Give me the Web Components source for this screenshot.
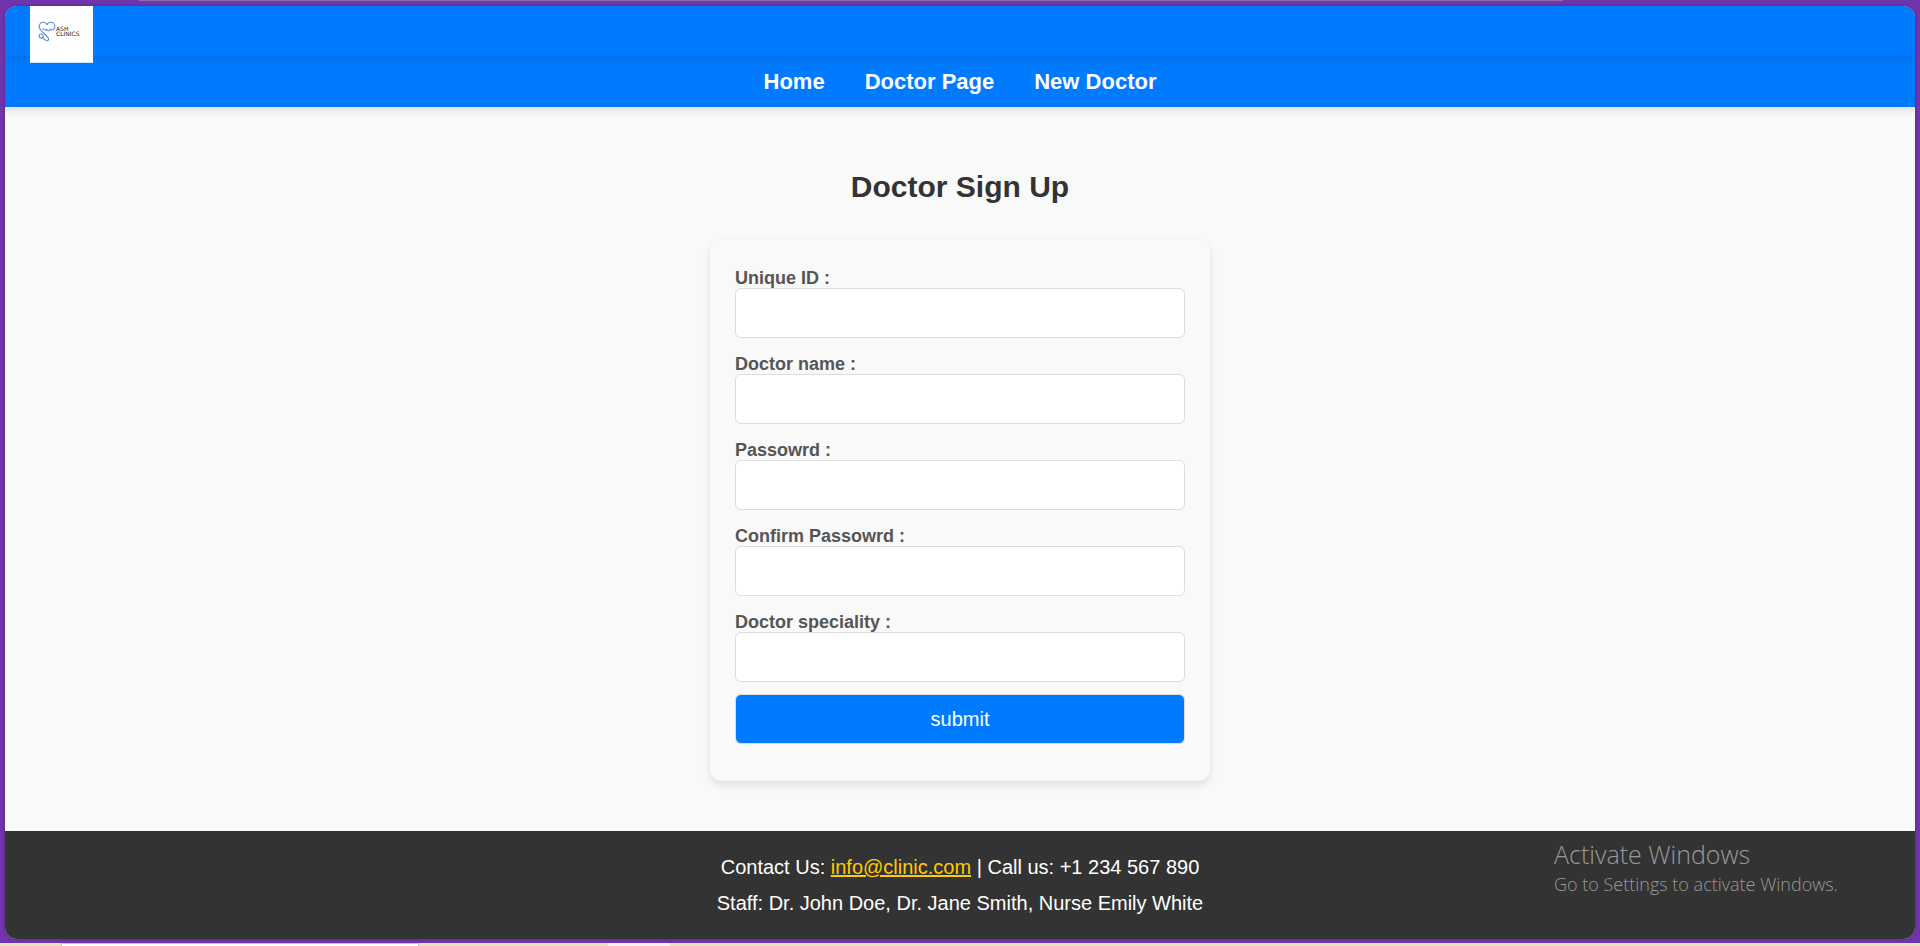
<!DOCTYPE html>
<html lang="en">
<head>
<meta charset="utf-8">
<meta name="viewport" content="width=device-width, initial-scale=1">
<title>Doctor Sign Up</title>
<style>
  body { margin: 0; font-family: "Liberation Sans", Arial, sans-serif; }
</style>
</head>
<body>
<clinic-desktop>
  <clinic-header></clinic-header>
  <clinic-nav>
    <a href="#home">Home</a>
    <a href="#doctor">Doctor Page</a>
    <a href="#new">New Doctor</a>
  </clinic-nav>
  <signup-page></signup-page>
  <clinic-footer></clinic-footer>
</clinic-desktop>

<script>
  const define = (name, html) => {
    const template = document.createElement('template');
    template.innerHTML = html;
    customElements.define(name, class extends HTMLElement {
      constructor() {
        super();
        this.attachShadow({ mode: 'open' }).append(template.content.cloneNode(true));
      }
    });
  };

  define('clinic-desktop', `
    <style>
      :host { display: flex; flex-direction: column; min-height: 100vh; background: #7034ac; box-sizing: border-box; }
      .edge { height: 1px; margin: 0 357px 5px 139px; background: #8a6cab; }
      .window { flex: 1; display: flex; flex-direction: column; margin: 0 5px 4px; border-radius: 12px; overflow: hidden; background: #f9f9f9; box-shadow: 0 0 3px rgba(0,0,0,.3); }
      .strip { height: 3px; display: flex; background: #e9e3b6; }
      .strip i { margin-left: 61px; width: 358px; background: #fff; border: 1px solid #c4c4cc; border-bottom: 0; box-sizing: border-box; }
      .strip b { margin-left: 189px; width: 62px; background: #f6f2e6; }
    </style>
    <div class="edge"></div>
    <div class="window"><slot></slot></div>
    <div class="strip"><i></i><b></b></div>`);

  define('clinic-header', `
    <style>
      :host { display: flex; height: 50px; padding: 0 25px; background: #007bff; box-shadow: 0 4px 8px rgba(0,0,0,.1); position: relative; z-index: 1; }
      svg { flex: none; width: 63px; height: 57px; background: #fff; box-sizing: border-box; border-bottom: 1px solid #d5e8fb; }
      text { font-family: "DejaVu Sans", sans-serif; font-size: 6px; fill: #2b2024; }
    </style>
    <svg viewBox="0 0 63 56" role="img" aria-label="Ash Clinics">
      <g fill="none" stroke="#5a8fd6" stroke-width="1.1" stroke-linecap="round" stroke-linejoin="round">
        <path d="M17 18.500C15.500 16 12 15.500 10.300 17.500 8.500 19.700 9.300 22.500 11 24.300L17.500 31C19.500 33 18.500 35 16.500 34.700 14.800 34.500 14 33 12.500 31.500"/>
        <path d="M17 18.500C18.500 16 22 15.500 23.800 17.500 25.500 19.700 25 22.500 22.800 23.700 21.500 24.400 20.800 23.800 20.300 23.200 19.300 25.300 17.300 25.300 16.500 23.300 15.300 24.500 13.800 24 13 22.500"/>
        <circle cx="11.200" cy="30" r="2"/>
      </g>
      <text x="26" y="25">ASH</text>
      <text x="26" y="30">CLINICS</text>
    </svg>`);

  define('clinic-nav', `
    <style>
      :host { display: block; background: #007bff; box-shadow: 0 4px 8px rgba(0,0,0,.1); }
      nav { display: flex; flex-wrap: wrap; justify-content: center; gap: 0 40px; line-height: 51px; font-size: 22px; font-weight: bold; }
      ::slotted(a) { color: #fff; text-decoration: none; }
    </style>
    <nav><slot></slot></nav>`);

  define('signup-page', `
    <style>
      :host { display: flex; flex: 1; flex-direction: column; align-items: center; padding: 60px 20px 50px; }
      h1 { margin: 0 0 33px; font-size: 30px; line-height: 40px; color: #333; }
      form { width: 100%; max-width: 500px; box-sizing: border-box; padding: 28px 25px 37px; border-radius: 12px; background: #f9f9f9; box-shadow: 0 4px 8px rgba(0,0,0,.1); display: grid; gap: 16px; }
      .actions { margin-top: -4px; }
      button { display: block; width: 100%; height: 50px; border: 1px solid #ddd; border-radius: 6px; background: #007bff; color: #fff; font: 20px "Liberation Sans", Arial, sans-serif; }
    </style>
    <h1>Doctor Sign Up</h1>
    <form>
      <form-field label="Unique ID :"></form-field>
      <form-field label="Doctor name :"></form-field>
      <form-field label="Passowrd :" type="password"></form-field>
      <form-field label="Confirm Passowrd :" type="password"></form-field>
      <form-field label="Doctor speciality :"></form-field>
      <div class="actions"><button type="button">submit</button></div>
    </form>`);

  customElements.define('form-field', class extends HTMLElement {
    connectedCallback() {
      if (this.shadowRoot) return;
      this.attachShadow({ mode: 'open' }).innerHTML = `
        <style>
          :host { display: block; }
          label { display: block; font-size: 18px; line-height: 20px; font-weight: bold; color: #555; }
          input { display: block; width: 100%; height: 50px; box-sizing: border-box; padding: 0 12px; border: 1px solid #ddd; border-radius: 6px; background: #fff; font: 18px "Liberation Sans", Arial, sans-serif; }
        </style>
        <label for="field"></label><input id="field">`;
      this.shadowRoot.querySelector('label').textContent = this.getAttribute('label');
      this.shadowRoot.querySelector('input').type = this.getAttribute('type') || 'text';
    }
  });

  define('clinic-footer', `
    <style>
      :host { display: block; position: relative; padding: 18px 20px; background: #333; color: #fff; text-align: center; font-size: 20px; line-height: 36px; }
      p { margin: 0; }
      a { color: #fc0; }
      aside { position: absolute; top: 6px; right: 77px; width: 284px; text-align: left; white-space: nowrap; color: #999; font-family: "Open Sans", "Noto Sans", sans-serif; }
      strong, span { display: block; font-weight: 300; }
      strong { font-size: 25px; line-height: 34px; }
      span { font-size: 18px; line-height: 26px; }
    </style>
    <p>Contact Us: <a href="mailto:info@clinic.com">info@clinic.com</a> | Call us: +1 234 567 890</p>
    <p>Staff: Dr. John Doe, Dr. Jane Smith, Nurse Emily White</p>
    <aside><strong>Activate Windows</strong><span>Go to Settings to activate Windows.</span></aside>`);
</script>
</body>
</html>
